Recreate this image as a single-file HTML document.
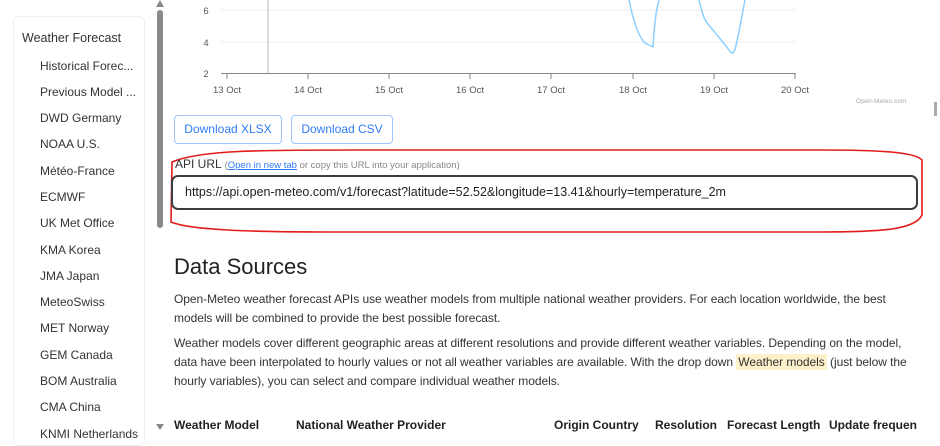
<!DOCTYPE html>
<html><head><meta charset="utf-8"><style>
*{margin:0;padding:0;box-sizing:border-box}
body{width:940px;height:431px;overflow:hidden;background:#fff;font-family:"Liberation Sans",sans-serif;color:#222;position:relative}
.a{position:absolute;white-space:nowrap}
.side{position:absolute;left:13px;top:16px;width:132px;height:430px;border:1px solid #eef0f3;border-radius:6px}
.si{position:absolute;font-size:12px;color:#333;white-space:nowrap}
.btn{position:absolute;top:115px;height:29px;border:1px solid #9ec5fe;border-radius:4px;color:#2f7cf6;font-size:12px;line-height:27px;text-align:center}
p.t{position:absolute;left:174px;font-size:12px;line-height:19px;color:#333;letter-spacing:-0.05px;white-space:nowrap}
.th{position:absolute;top:418px;font-size:12px;font-weight:bold;color:#222;white-space:nowrap}
</style></head><body>
<div class="side"></div>
<div class="si" style="left:22px;top:31px;font-size:12.5px">Weather Forecast</div>
<div class="si" style="left:40px;top:59px">Historical Forec...</div>
<div class="si" style="left:40px;top:85px">Previous Model ...</div>
<div class="si" style="left:40px;top:111px">DWD Germany</div>
<div class="si" style="left:40px;top:137px">NOAA U.S.</div>
<div class="si" style="left:40px;top:164px">Météo-France</div>
<div class="si" style="left:40px;top:190px">ECMWF</div>
<div class="si" style="left:40px;top:216px">UK Met Office</div>
<div class="si" style="left:40px;top:243px">KMA Korea</div>
<div class="si" style="left:40px;top:269px">JMA Japan</div>
<div class="si" style="left:40px;top:295px">MeteoSwiss</div>
<div class="si" style="left:40px;top:321px">MET Norway</div>
<div class="si" style="left:40px;top:348px">GEM Canada</div>
<div class="si" style="left:40px;top:374px">BOM Australia</div>
<div class="si" style="left:40px;top:400px">CMA China</div>
<div class="si" style="left:40px;top:427px">KNMI Netherlands</div>

<svg class="a" style="left:0;top:0" width="940" height="431">
<path d="M156 7 L160 0 L164 7Z" fill="#888"/>
<rect x="157" y="10" width="6" height="218" rx="3" fill="#8a8a8a"/>
<path d="M156 424 L160 430 L164 424Z" fill="#888"/>
<rect x="934" y="102" width="3" height="14" fill="#aaa"/>
<line x1="221" y1="10" x2="795" y2="10" stroke="#eee"/>
<line x1="221" y1="42" x2="795" y2="42" stroke="#eee"/>
<line x1="268" y1="0" x2="268" y2="73" stroke="#bbb"/>
<line x1="221" y1="73.5" x2="796" y2="73.5" stroke="#888"/>
<g stroke="#888"><line x1="227" y1="73" x2="227" y2="79"/><line x1="308" y1="73" x2="308" y2="79"/><line x1="389" y1="73" x2="389" y2="79"/><line x1="470" y1="73" x2="470" y2="79"/><line x1="551" y1="73" x2="551" y2="79"/><line x1="633" y1="73" x2="633" y2="79"/><line x1="714" y1="73" x2="714" y2="79"/><line x1="795" y1="73" x2="795" y2="79"/></g>
<g font-family="Liberation Sans" font-size="9.5" fill="#555" text-anchor="middle">
<text x="206" y="14">6</text><text x="206" y="46">4</text><text x="206" y="77">2</text>
<text x="227" y="93">13 Oct</text><text x="308" y="93">14 Oct</text><text x="389" y="93">15 Oct</text><text x="470" y="93">16 Oct</text><text x="551" y="93">17 Oct</text><text x="633" y="93">18 Oct</text><text x="714" y="93">19 Oct</text><text x="795" y="93">20 Oct</text>
<text x="881" y="103" font-size="6.5" fill="#aaa">Open-Meteo.com</text>
</g>
<path d="M629 0 C632 15 637 35 645 43 L653 47 C654 30 656 10 659 0" fill="none" stroke="#8fd0ff" stroke-width="1.5"/>
<path d="M699 0 C702 12 704 20 708 24 L726 46 C729 50 731 54 733 53 C736 52 740 25 745 0" fill="none" stroke="#8fd0ff" stroke-width="1.5"/>
<path d="M172 162 C200 150 260 150 360 150 L820 150 C880 150 915 152 922 160 L922 215 C915 230 880 232 820 232 L330 232 C250 232 190 230 171 222 Z" fill="none" stroke="#e41b1b" stroke-width="1.6"/>
</svg>

<div class="btn" style="left:174px;width:108px">Download XLSX</div>
<div class="btn" style="left:291px;width:102px">Download CSV</div>
<div class="a" style="left:175px;top:157px;font-size:12px;color:#333">API URL <span style="font-size:9.5px;color:#888">(<span style="color:#2f7cf6;text-decoration:underline">Open in new tab</span> or copy this URL into your application)</span></div>
<div class="a" style="left:171px;top:175px;width:747px;height:35px;border:2px solid #3a3d42;border-radius:7px;font-size:12.5px;line-height:31px;padding-left:12px;color:#222">https://api.open-meteo.com/v1/forecast?latitude=52.52&amp;longitude=13.41&amp;hourly=temperature_2m</div>

<div class="a" style="left:174px;top:254px;font-size:22px;color:#222">Data Sources</div>
<p class="t" style="top:290px">Open-Meteo weather forecast APIs use weather models from multiple national weather providers. For each location worldwide, the best<br>models will be combined to provide the best possible forecast.</p>
<p class="t" style="top:334px">Weather models cover different geographic areas at different resolutions and provide different weather variables. Depending on the model,<br>data have been interpolated to hourly values or not all weather variables are available. With the drop down <span style="background:#fdf1cc;padding:1px 2px">Weather models</span> (just below the<br>hourly variables), you can select and compare individual weather models.</p>

<div class="th" style="left:174px">Weather Model</div>
<div class="th" style="left:296px">National Weather Provider</div>
<div class="th" style="left:554px">Origin Country</div>
<div class="th" style="left:655px">Resolution</div>
<div class="th" style="left:727px">Forecast Length</div>
<div class="th" style="left:829px">Update frequen</div>
</body></html>
